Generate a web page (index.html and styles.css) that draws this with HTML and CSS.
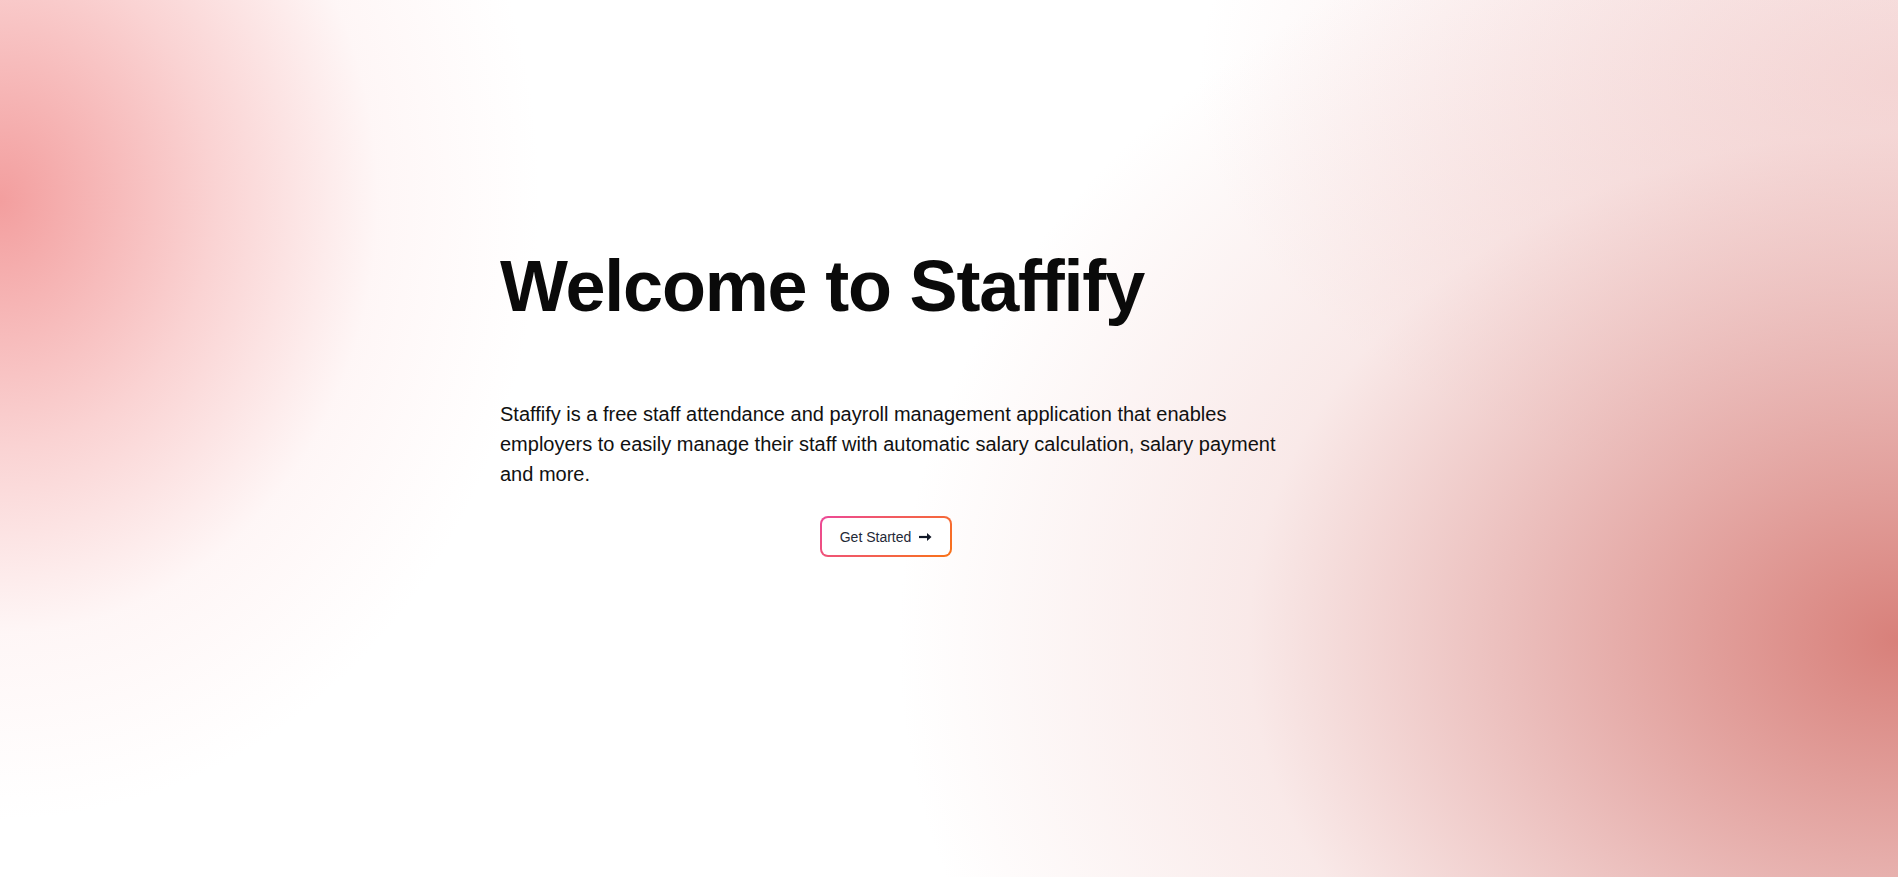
FILE: index.html
```html
<!DOCTYPE html>
<html lang="en">
<head>
<meta charset="utf-8">
<title>Staffify</title>
<link rel="stylesheet" href="styles.css">
</head>
<body>
<main class="hero">
  <div class="hero-content">
    <h1 class="title">Welcome to Staffify</h1>
    <p class="lead">Staffify is a free staff attendance and payroll management application that enables employers to easily manage their staff with automatic salary calculation, salary payment and more.</p>
    <div class="actions">
      <a class="btn" href="#">Get Started
        <svg class="arrow" width="14" height="10" viewBox="0 0 14 10" aria-hidden="true"><path d="M0 5h11" stroke="#111827" stroke-width="2.2"/><path d="M8 1L12.5 5L8 9Z" fill="#111827"/></svg>
      </a>
    </div>
  </div>
</main>
</body>
</html>
```
FILE: styles.css
```css
html, body {
  margin: 0;
  padding: 0;
  height: 100%;
}
body {
  font-family: "Liberation Sans", Arial, sans-serif;
  color: #111;
  background-color: #fff;
  background-image:
    radial-gradient(ellipse 540px 620px at 0px 200px, rgba(242,150,150,0.92) 0%, rgba(246,175,175,0.55) 40%, rgba(252,220,220,0.25) 70%, rgba(255,255,255,0) 100%),
    radial-gradient(ellipse 1000px 780px at 1898px 640px, rgba(216,128,122,1) 0%, rgba(226,160,157,0.75) 35%, rgba(240,200,198,0.4) 65%, rgba(255,255,255,0) 100%),
    radial-gradient(ellipse 700px 420px at 1898px 80px, rgba(240,195,195,0.6) 0%, rgba(255,255,255,0) 100%);
  overflow: hidden;
}
.hero {
  height: 877px;
  display: flex;
}
.hero-content {
  margin-left: 500px;
  width: 795px;
  padding-top: 250px;
}
.title {
  margin: 0;
  font-family: "Liberation Sans", Arial, sans-serif;
  font-weight: 700;
  font-size: 72px;
  line-height: 1;
  letter-spacing: -1.2px;
  color: #0a0a0a;
}
.lead {
  margin: 77px 0 0;
  font-size: 20px;
  line-height: 30px;
  color: #111;
}
.actions {
  display: flex;
  justify-content: center;
  margin-top: 27px;
  width: 772px;
}
.btn {
  display: inline-flex;
  align-items: center;
  gap: 8px;
  height: 41px;
  box-sizing: border-box;
  padding: 0 17px 0 18px;
  border: 2px solid transparent;
  border-radius: 8px;
  background:
    linear-gradient(#fff, #fff) padding-box,
    linear-gradient(135deg, #ec4899, #f97316) border-box;
  color: #1f2937;
  font-size: 14px;
  text-decoration: none;
}
.arrow {
  display: block;
}
```
